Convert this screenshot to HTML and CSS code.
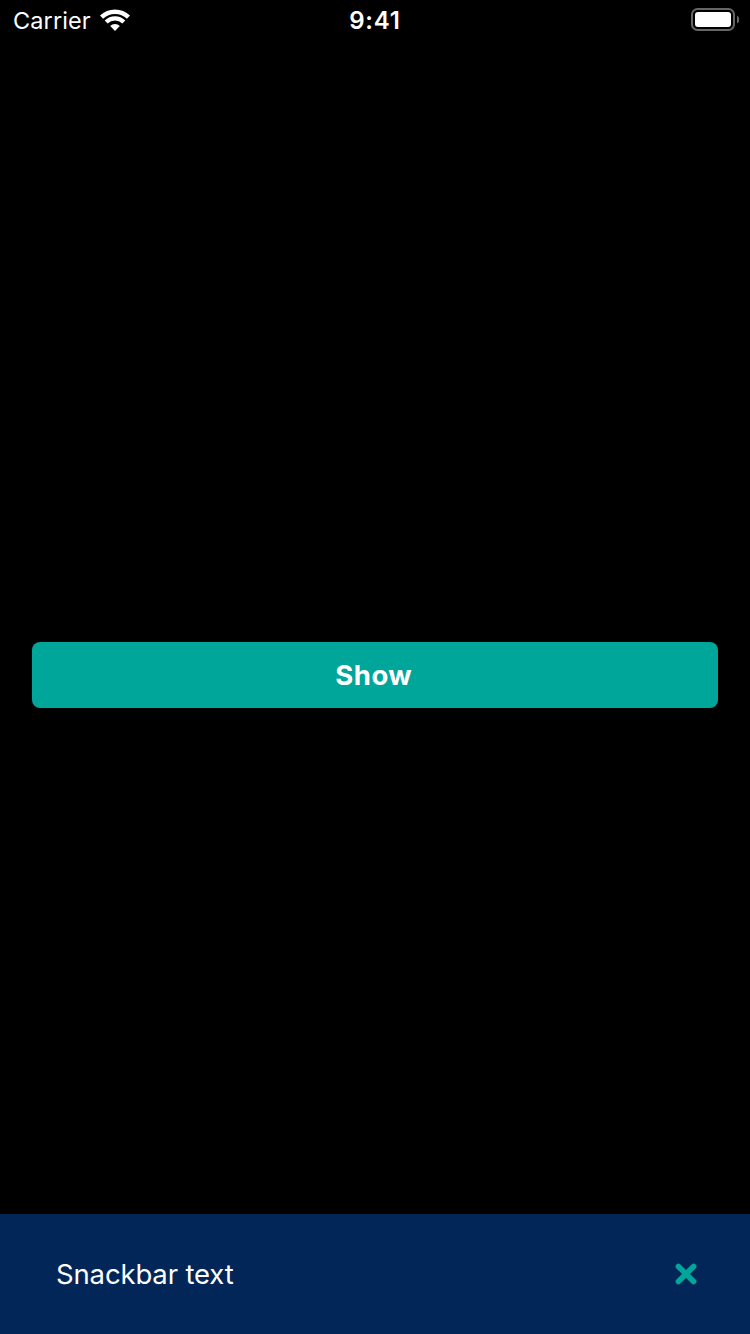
FILE: index.html
```html
<!DOCTYPE html>
<html lang="en">
<head>
<meta charset="utf-8">
<title>Snackbar</title>
<link rel="stylesheet" href="styles.css">
</head>
<body>
<div class="screen">
  <header class="status">
    <div class="status-left">
      <span class="carrier">Carrier</span>
      <svg class="wifi" width="30" height="22" viewBox="0 0 30 22" fill="none" stroke="#fff">
        <path d="M1.5 8.1A19.4 19.4 0 0 1 28.5 8.1" stroke-width="4.5"/>
        <path d="M6.2 13A12.5 12.5 0 0 1 23.8 13" stroke-width="4.2"/>
        <path d="M10.2 17.1A6.8 6.8 0 0 1 19.8 17.1L15 21.9Z" fill="#fff" stroke="none"/>
      </svg>
    </div>
    <span class="time">9:41</span>
    <div class="status-right">
      <svg class="battery" width="48" height="23" viewBox="0 0 48 23">
        <rect x="1" y="1" width="42" height="21" rx="5.5" fill="none" stroke="#666" stroke-width="2"/>
        <rect x="4" y="4" width="36" height="15" rx="3" fill="#fff"/>
        <path d="M46 7.5Q48.5 9 48.5 11.5T46 15.5Z" fill="#666"/>
      </svg>
    </div>
  </header>
  <main class="content"><button class="show"><span class="show-label">Show</span></button></main>
  <footer class="snackbar">
    <span class="message">Snackbar text</span>
    <svg class="close" width="22" height="22" viewBox="0 0 22 22" stroke="#00a699" stroke-width="5.6" stroke-linecap="round">
      <path d="M3.4 3.4L18.6 18.6M18.6 3.4L3.4 18.6"/>
    </svg>
  </footer>
</div>
</body>
</html>
```
FILE: styles.css
```css
body { margin: 0; background: #000; color: #fff; font-family: Inter, sans-serif; }
.screen { display: flex; flex-direction: column; height: 1334px; }
.status { display: grid; grid-template-columns: 1fr auto 1fr; height: 40px; box-sizing: border-box; padding: 0 11px 0 13px; align-items: center; }
.status-left { display: flex; align-items: center; gap: 9.2px; }
.carrier { font-size: 23.5px; line-height: 38px; padding-top: 2px; letter-spacing: 0.1px; }
.time { font-size: 24px; line-height: 38px; padding-top: 2px; font-weight: 600; letter-spacing: 0.8px; margin-right: 2px; }
.status-right { display: flex; justify-content: flex-end; padding-bottom: 1px; }
.battery, .wifi, .close { display: block; }
.content { flex: 1; padding: 602px 32px 0; }
.show { display: block; width: 100%; height: 66px; padding: 0 2.5px 0 0; border: 0; border-radius: 8px; background: #00a699; color: #fff; font: 700 27.5px/66px Inter, sans-serif; letter-spacing: 0.5px; }
.snackbar { display: flex; align-items: center; justify-content: space-between; height: 120px; box-sizing: border-box; padding: 0 53px 0 56px; background: #022658; }
.message { font-size: 27.5px; line-height: 40px; letter-spacing: -0.15px; }
```
